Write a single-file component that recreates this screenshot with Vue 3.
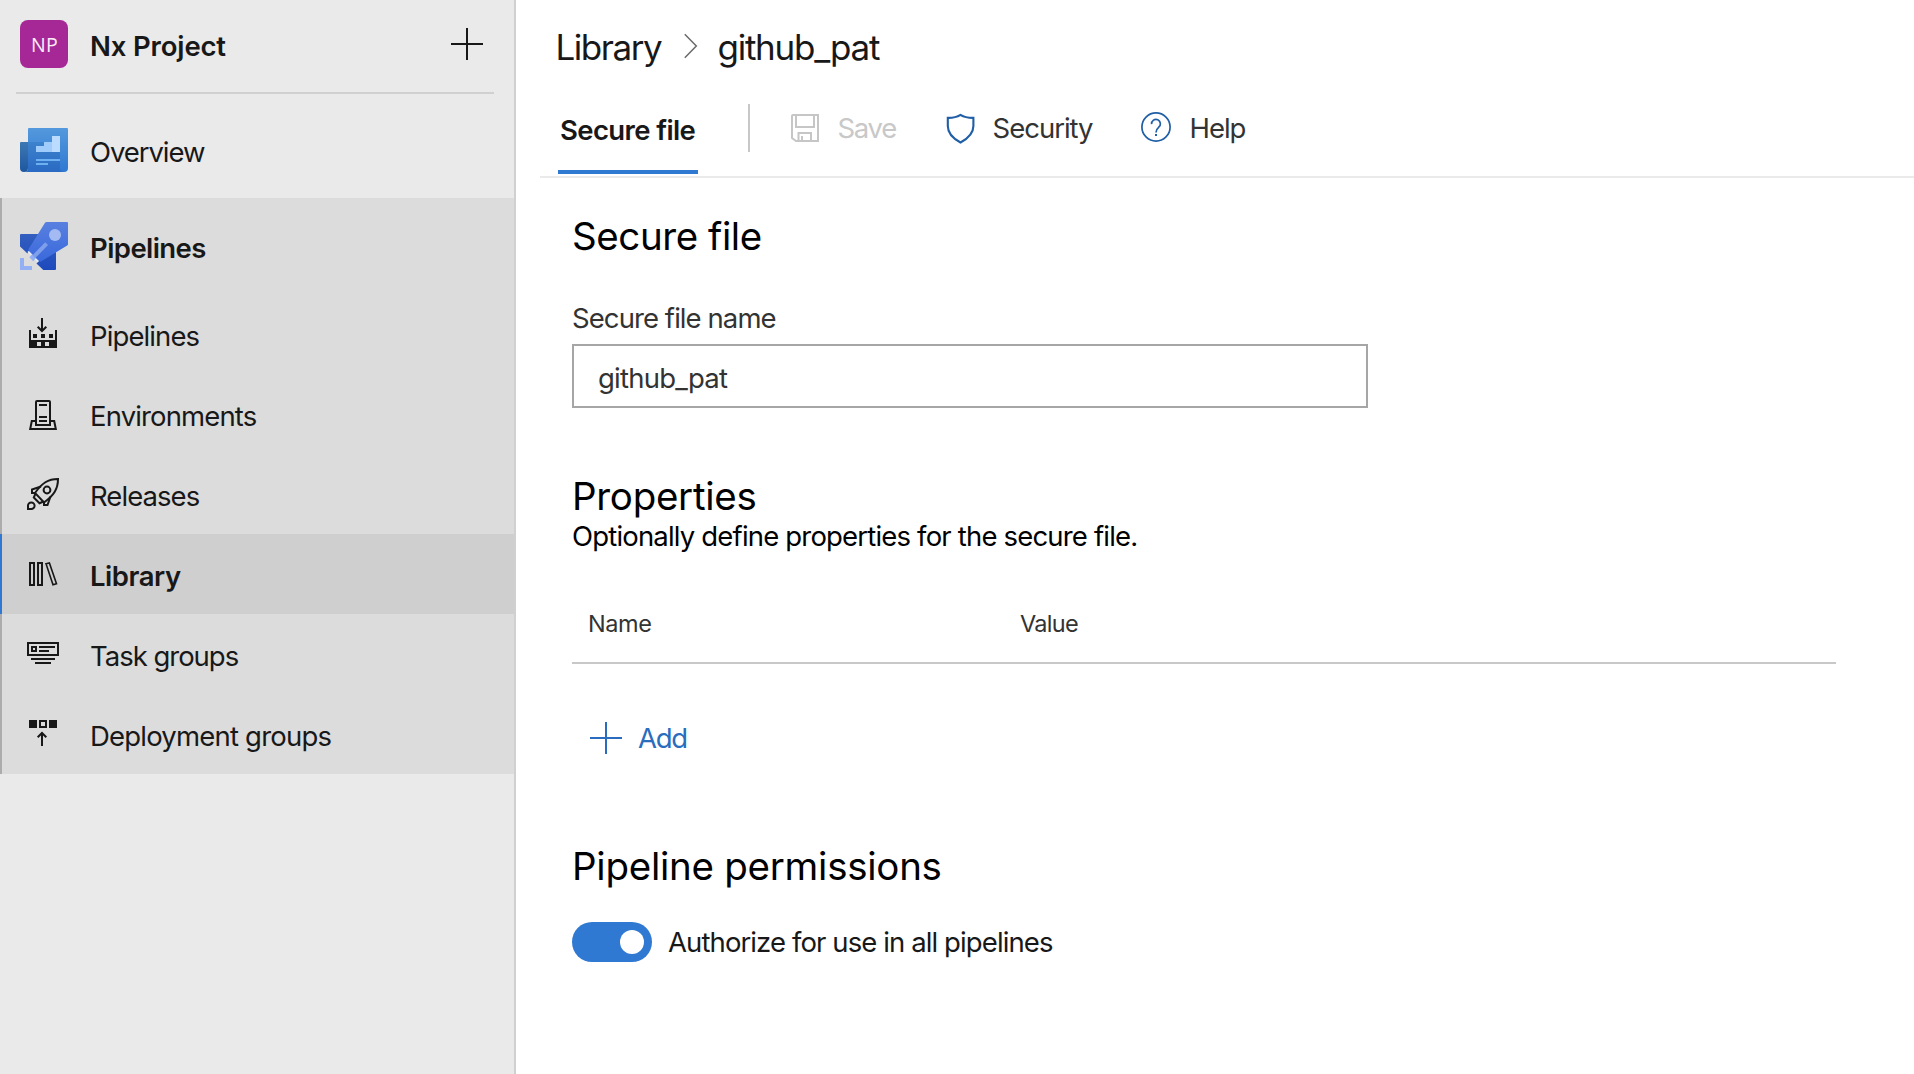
<script setup>
import { ref } from 'vue'

const fileName = ref('github_pat')
const authorized = ref(true)

// tracking: per-label letter spacing in px
const navItems = [
  { id: 'pipelines', label: 'Pipelines', tracking: -0.89 },
  { id: 'environments', label: 'Environments', tracking: -0.87 },
  { id: 'releases', label: 'Releases', tracking: -0.95 },
  { id: 'library', label: 'Library', tracking: -0.45, active: true },
  { id: 'task-groups', label: 'Task groups', tracking: -1.02 },
  { id: 'deployment-groups', label: 'Deployment groups', tracking: -0.8 },
]
</script>

<template>
  <div class="app">
    <aside class="sidebar">
      <header class="project">
        <span class="avatar">NP</span>
        <span class="project-name">Nx Project</span>
        <svg class="plus" width="32" height="32" viewBox="0 0 32 32">
          <path d="M16 0V32M0 16H32" stroke="#181818" stroke-width="2" />
        </svg>
      </header>

      <a class="hub">
        <svg class="hub-icon" width="48" height="44" viewBox="0 0 48 44">
          <defs>
            <linearGradient id="ovTab" x1="0" y1="0" x2="0" y2="1">
              <stop offset="0" stop-color="#3c78b4" /><stop offset="1" stop-color="#1f579f" />
            </linearGradient>
            <linearGradient id="ovPage" x1="0" y1="0" x2="0" y2="1">
              <stop offset="0" stop-color="#5499dc" /><stop offset="1" stop-color="#2f78d2" />
            </linearGradient>
            <linearGradient id="ovShade" x1="0" y1="0" x2="0" y2="1">
              <stop offset="0" stop-color="#3d82cc" /><stop offset="1" stop-color="#2a6ac3" />
            </linearGradient>
          </defs>
          <path d="M9 0H47q1 0 1 1V40a4 4 0 0 1-4 4H8V1q0-1 1-1z" fill="url(#ovPage)" />
          <path d="M8 14H40V40a4 4 0 0 0 4 4H4a4 4 0 0 0 4-4z" fill="url(#ovShade)" />
          <path d="M1 14H8V40a4 4 0 0 1-8 0V15q0-1 1-1z" fill="url(#ovTab)" />
          <path d="M16 18H24V14H32V24H16z" fill="#9fccfa" />
          <path d="M32 8H40V24H32z" fill="#bcdcff" />
          <path d="M16 31H40V33H16zM16 35H28V37H16z" fill="#6fb0f1" />
        </svg>
        <span class="label overview">Overview</span>
      </a>

      <section class="group">
        <a class="hub">
          <svg class="hub-icon" width="48" height="48" viewBox="0 0 48 48">
            <defs>
              <linearGradient id="plBack" x1="0" y1="12" x2="0" y2="48" gradientUnits="userSpaceOnUse">
                <stop offset="0" stop-color="#335fbf" /><stop offset="1" stop-color="#1d49bd" />
              </linearGradient>
              <linearGradient id="plBody" x1="0" y1="0" x2="0" y2="1">
                <stop offset="0" stop-color="#5880e0" /><stop offset="1" stop-color="#3a69dc" />
              </linearGradient>
            </defs>
            <path d="M1 12H20L7.5 31.5 0 24.5V13q0-1 1-1z" fill="url(#plBack)" />
            <path d="M36 28V47q0 1-1 1H23.3L16.5 41.5 20 38z" fill="url(#plBack)" />
            <path d="M26.5 0H47q1 0 1 1V22q0 1-.8 1.6L21 39.4Q20 40 19.2 39.2L8.6 28.8Q8 28 8.5 27.2L25 .8Q25.6 0 26.5 0z" fill="url(#plBody)" />
            <circle cx="35" cy="13" r="6" fill="#a3bbf2" />
            <path d="M12.2 36.4L26.6 21.6" stroke="#7f9fec" stroke-width="4" />
            <path d="M10.6 34L14.5 38" stroke="#93b0f4" stroke-width="3.6" />
            <path d="M8 29.5l3.2 3.2M15 37l3.2 2.6" stroke="#e6ecfa" stroke-width="1.6" />
            <path d="M0 36H4V44H12V48H0z" fill="#93b0f4" />
          </svg>
          <span class="label hub-title">Pipelines</span>
        </a>

        <a v-for="item in navItems" :key="item.id" class="item" :class="{ active: item.active }">
          <svg class="item-icon" width="32" height="32" viewBox="0 0 32 32" fill="none" stroke="#181818" stroke-width="2">
            <template v-if="item.id === 'pipelines'">
              <path d="M15 0V13M10.7 8.7L15 13l4.3-4.3" />
              <path d="M2 12H4V22H28V12H30V30H2zM10 24V28H14V24zM18 24V28H22V24zM6 16H10V20H6zM14 16H18V20H14zM22 16H26V20H22z" fill="#181818" fill-rule="evenodd" stroke="none" />
            </template>
            <template v-else-if="item.id === 'environments'">
              <path d="M9 27V4q0-1 1-1H22q1 0 1 1V27zM12 7H20M12 19H20M12 23H20" />
              <path d="M9 23H4.8L3.2 31H28.8L27.2 23H23" />
            </template>
            <template v-else-if="item.id === 'releases'">
              <path d="M31 1C21 1 15 5 8 15L17 24.5C27 17 31 11 31 1z" />
              <circle cx="20" cy="12" r="3.4" />
              <path d="M14 8.500L5 11.500V15H8M23.500 18.500L20.500 27H17V24M8.500 15.500L6.800 19.500 12.500 25.200 16.500 23.500" />
              <path d="M1 31V27.800A3.300 3.300 0 1 1 4.200 31z" />
            </template>
            <template v-else-if="item.id === 'library'">
              <path d="M3 5H7V27H3zM11 5H15V27H11z" />
              <path d="M19 5.700L22.400 4.900 29.500 25.700 26 26.800z" stroke-width="1.6" />
            </template>
            <template v-else-if="item.id === 'task-groups'">
              <path d="M1 5H31V17H1zM5 9H9V13H5zM12 9H28M12 13H22M4 21H28M8 25H24" />
            </template>
            <template v-else>
              <path d="M2 2H10V10H2zM22 2H30V10H22z" fill="#181818" stroke="none" />
              <path d="M13 3H19V9H13zM15 28V15M10.700 19.300L15 15l4.300 4.300" />
            </template>
          </svg>
          <span class="label" :style="{ letterSpacing: item.tracking + 'px' }">{{ item.label }}</span>
        </a>
      </section>
    </aside>

    <main class="main">
      <nav class="crumbs">
        <span class="crumb-root">Library</span>
        <svg class="chevron" width="14" height="26" viewBox="0 0 14 26">
          <path d="M.8 1.3L12.3 13 .8 24.7" fill="none" stroke="#6a6a6a" stroke-width="1.5" />
        </svg>
        <span class="crumb-leaf">github_pat</span>
      </nav>

      <div class="toolbar">
        <a class="tab">Secure file</a>
        <span class="divider"></span>
        <button class="command save" disabled>
          <svg width="32" height="32" viewBox="0 0 32 32" fill="none" stroke="#c6c6c6" stroke-width="2">
            <path d="M4 3H29V29H7L3 26V4q0-1 1-1zM7 3V15H25V3M9.5 29V21H22V29M13 24V29" />
          </svg>
          <span>Save</span>
        </button>
        <button class="command security">
          <svg width="32" height="32" viewBox="0 0 32 32" fill="none" stroke="#205ea6" stroke-width="2.1">
            <path d="M16.5 2.900C13 5 8.500 6 3.800 5.900V14C3.800 21 9 26.500 16.500 30.500 24 26.500 29.400 21 29.400 14V5.900C24.500 6 20 5 16.500 2.900z" />
          </svg>
          <span>Security</span>
        </button>
        <button class="command help">
          <svg width="32" height="32" viewBox="0 0 32 32" fill="none" stroke="#205ea6" stroke-width="1.7">
            <circle cx="16" cy="15" r="14.1" />
            <path d="M11.600 12.100A4.400 4.400 0 1 1 18.600 15.300C17 16.600 16 17.600 16 20.400" />
            <path d="M15 21.900H17V24H15z" fill="#205ea6" stroke="none" />
          </svg>
          <span>Help</span>
        </button>
      </div>

      <div class="content">
        <h2 class="heading secure-heading">Secure file</h2>
        <label class="field-label" for="file-name">Secure file name</label>
        <input id="file-name" v-model="fileName" class="field" type="text" />

        <h2 class="heading properties-heading">Properties</h2>
        <p class="hint">Optionally define properties for the secure file.</p>
        <div class="table-head">
          <span class="col-name">Name</span>
          <span class="col-value">Value</span>
        </div>
        <button class="add">
          <svg width="32" height="32" viewBox="0 0 32 32">
            <path d="M16 0V32M0 16H32" stroke="#2a6cbd" stroke-width="2" />
          </svg>
          <span>Add</span>
        </button>

        <h2 class="heading permissions-heading">Pipeline permissions</h2>
        <div class="permission">
          <button class="toggle" :class="{ on: authorized }" @click="authorized = !authorized">
            <span class="knob"></span>
          </button>
          <span class="permission-label">Authorize for use in all pipelines</span>
        </div>
      </div>
    </main>
  </div>
</template>

<style>
body {
  margin: 0;
  background: #fff;
}
</style>

<style scoped>
.app {
  display: flex;
  width: 100%;
  height: 100vh;
  overflow: hidden;
  font-family: Inter, 'Liberation Sans', sans-serif;
  font-size: 27.5px;
  color: #181818;
}
svg {
  display: block;
  flex: none;
}
button {
  margin: 0;
  padding: 0;
  border: 0;
  background: none;
  font: inherit;
  color: inherit;
}

/* sidebar */
.sidebar {
  flex: none;
  box-sizing: border-box;
  width: 516px;
  border-right: 2px solid #d0d0d0;
  background: #eaeaea;
}
.project {
  display: flex;
  align-items: center;
  box-sizing: border-box;
  height: 94px;
  margin: 0 20px 8px 16px;
  padding: 0 11px 4px 4px;
  border-bottom: 2px solid #d0d0d0;
}
.avatar {
  box-sizing: border-box;
  width: 48px;
  height: 48px;
  padding-left: 1px;
  border-radius: 8px;
  background: #a62896;
  color: #fbeefa;
  font: 400 19.5px/49px 'Open Sans', 'Noto Sans', sans-serif;
  letter-spacing: 0.3px;
  text-align: center;
}
.project-name {
  flex: 1;
  padding-top: 4px;
  margin-left: 22px;
  font-weight: 600;
  letter-spacing: -0.15px;
}
.hub {
  display: flex;
  align-items: center;
  height: 96px;
  padding-left: 20px;
}
.label {
  padding-top: 4px;
  white-space: nowrap;
}
.hub .label {
  margin-left: 22px;
}
.hub .overview {
  letter-spacing: -1.07px;
}
.group {
  background: linear-gradient(90deg, #acacac 2px, #dcdcdc 2px);
}
.hub-title {
  font-weight: 600;
  letter-spacing: -0.57px;
}
.item {
  display: flex;
  align-items: center;
  height: 80px;
  padding-left: 27px;
}
.item .label {
  margin-left: 31px;
}
.item.active {
  background: linear-gradient(90deg, #3079d2 2px, #cfcfcf 2px);
  font-weight: 600;
}

/* page header */
.main {
  flex: 1;
  min-width: 0;
}
.crumbs {
  display: flex;
  align-items: center;
  height: 94px;
  padding-left: 39.5px;
  font-size: 35px;
}
.crumb-root {
  width: 128px;
  letter-spacing: -1.47px;
}
.crumb-leaf {
  margin-left: 20px;
  letter-spacing: -1.26px;
}
.chevron {
  margin-bottom: 2px;
}
.toolbar {
  display: flex;
  align-items: flex-start;
  height: 82px;
  margin-left: 24px;
  border-bottom: 2px solid #eaeaea;
}
.tab {
  box-sizing: border-box;
  width: 140px;
  height: 80px;
  margin-left: 18px;
  padding-left: 2px;
  border-bottom: 4px solid #3079d2;
  font-weight: 600;
  line-height: 72px;
  letter-spacing: -0.62px;
  white-space: nowrap;
}
.divider {
  width: 2px;
  height: 48px;
  margin: 10px 39px 0 50px;
  background: #c8c8c8;
}
.command {
  display: flex;
  align-items: center;
  gap: 16.5px;
  height: 68px;
  color: #333;
}
.save {
  width: 155px;
  color: #c8c8c8;
  letter-spacing: -1.3px;
}
.security {
  width: 196px;
  letter-spacing: -1px;
}
.help {
  gap: 17.5px;
  letter-spacing: -1.04px;
}

/* content */
.content {
  display: flex;
  flex-direction: column;
  align-items: flex-start;
  padding: 34px 78px 0 56px;
}
.heading {
  margin: 0;
  font-size: 38.5px;
  font-weight: 400;
  line-height: 48px;
  color: #000;
}
.secure-heading {
  letter-spacing: -0.42px;
}
.field-label {
  margin-top: 42px;
  line-height: 32px;
  letter-spacing: -0.92px;
  color: #333;
}
.field {
  box-sizing: border-box;
  width: 796px;
  height: 64px;
  margin-top: 10px;
  padding: 4px 24px 0;
  border: 2px solid #a6a6a6;
  border-radius: 0;
  background: #fff;
  color: #333;
  font: inherit;
  letter-spacing: -0.77px;
}
.properties-heading {
  margin-top: 64px;
  letter-spacing: -0.29px;
}
.hint {
  margin: 0;
  line-height: 32px;
  letter-spacing: -0.82px;
  color: #000;
}
.table-head {
  display: flex;
  align-self: stretch;
  height: 78px;
  margin-top: 32px;
  padding-left: 16px;
  border-bottom: 2px solid #c8c8c8;
  font-size: 23.5px;
  line-height: 80px;
  color: #333;
}
.col-name {
  width: 432px;
  letter-spacing: -0.4px;
}
.col-value {
  letter-spacing: -0.7px;
}
.add {
  display: flex;
  align-items: center;
  gap: 16px;
  height: 48px;
  margin: 50px 0 0 18px;
  color: #2a6cbd;
  letter-spacing: -1.31px;
}
.permissions-heading {
  margin-top: 80px;
  letter-spacing: -0.26px;
}
.permission {
  display: flex;
  align-items: center;
  gap: 16px;
  margin-top: 32px;
}
.toggle {
  display: flex;
  align-items: center;
  width: 80px;
  height: 40px;
  padding: 0 8px;
  border-radius: 20px;
  background: #a6a6a6;
}
.toggle.on {
  justify-content: flex-end;
  background: #3079d2;
}
.knob {
  width: 24px;
  height: 24px;
  border-radius: 50%;
  background: #fff;
}
.permission-label {
  letter-spacing: -0.9px;
}
</style>
